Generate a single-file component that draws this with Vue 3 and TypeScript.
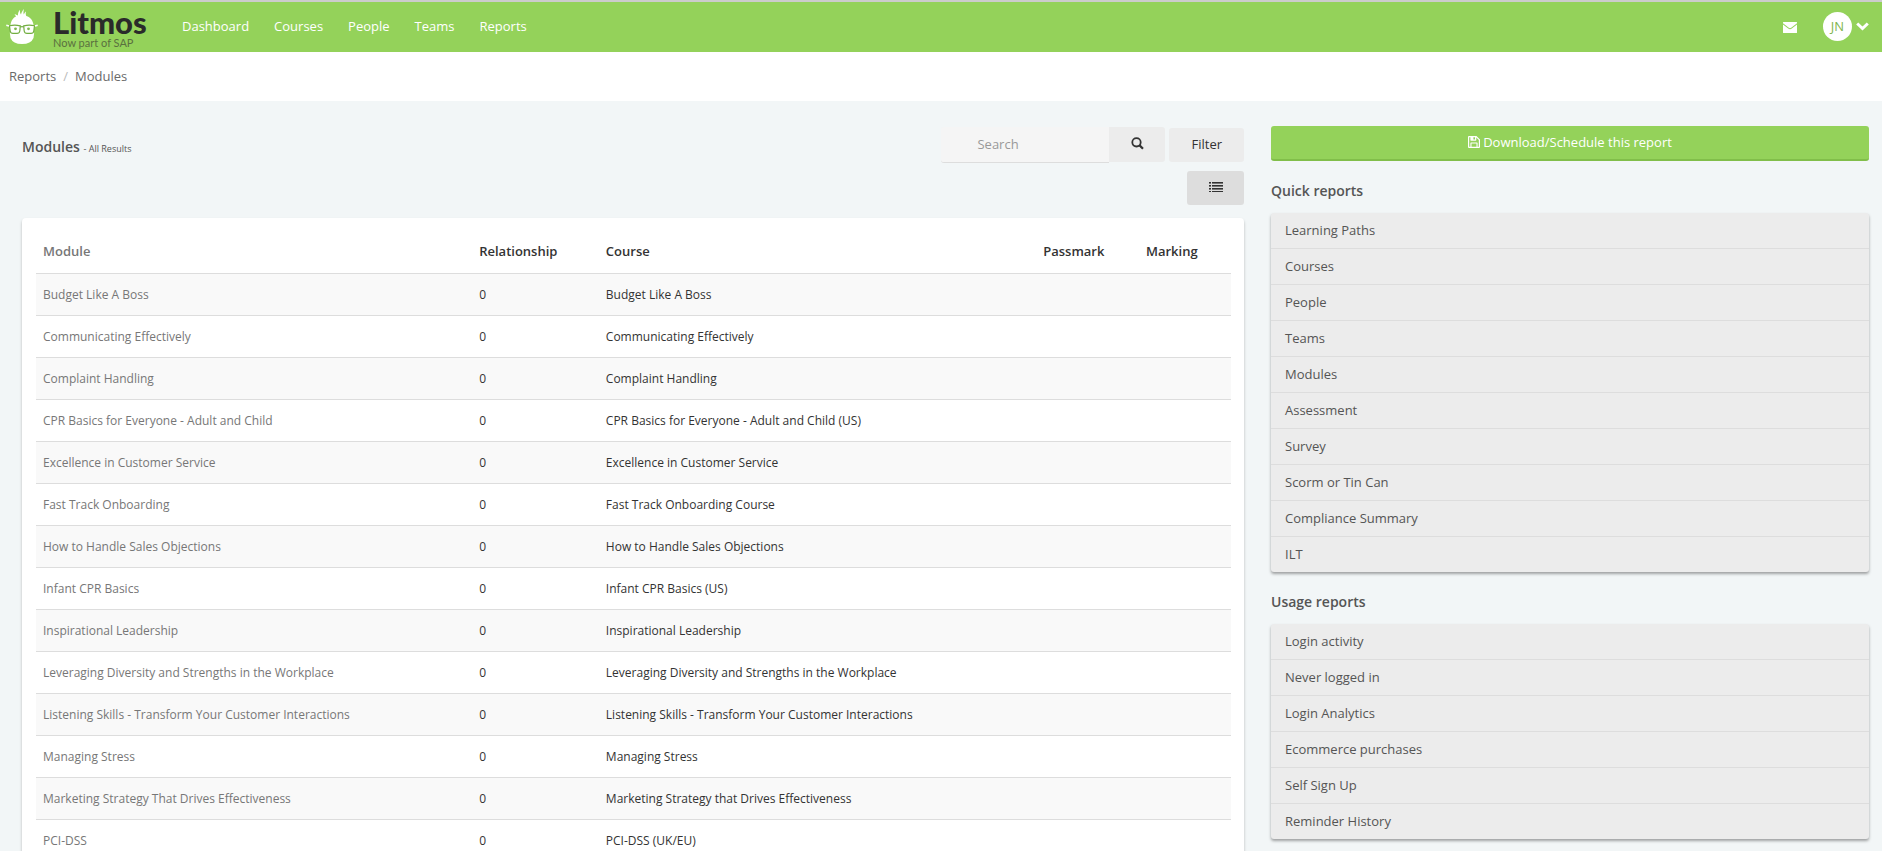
<script setup lang="ts">
interface ModuleRow {
  module: string
  relationship: number
  course: string
  passmark?: string
  marking?: string
}

interface ReportGroup {
  title: string
  items: string[]
}

const navItems: string[] = ['Dashboard', 'Courses', 'People', 'Teams', 'Reports']

const rows: ModuleRow[] = [
  { module: 'Budget Like A Boss', relationship: 0, course: 'Budget Like A Boss' },
  { module: 'Communicating Effectively', relationship: 0, course: 'Communicating Effectively' },
  { module: 'Complaint Handling', relationship: 0, course: 'Complaint Handling' },
  { module: 'CPR Basics for Everyone - Adult and Child', relationship: 0, course: 'CPR Basics for Everyone - Adult and Child (US)' },
  { module: 'Excellence in Customer Service', relationship: 0, course: 'Excellence in Customer Service' },
  { module: 'Fast Track Onboarding', relationship: 0, course: 'Fast Track Onboarding Course' },
  { module: 'How to Handle Sales Objections', relationship: 0, course: 'How to Handle Sales Objections' },
  { module: 'Infant CPR Basics', relationship: 0, course: 'Infant CPR Basics (US)' },
  { module: 'Inspirational Leadership', relationship: 0, course: 'Inspirational Leadership' },
  { module: 'Leveraging Diversity and Strengths in the Workplace', relationship: 0, course: 'Leveraging Diversity and Strengths in the Workplace' },
  { module: 'Listening Skills - Transform Your Customer Interactions', relationship: 0, course: 'Listening Skills - Transform Your Customer Interactions' },
  { module: 'Managing Stress', relationship: 0, course: 'Managing Stress' },
  { module: 'Marketing Strategy That Drives Effectiveness', relationship: 0, course: 'Marketing Strategy that Drives Effectiveness' },
  { module: 'PCI-DSS', relationship: 0, course: 'PCI-DSS (UK/EU)' },
]

const groups: ReportGroup[] = [
  {
    title: 'Quick reports',
    items: ['Learning Paths', 'Courses', 'People', 'Teams', 'Modules', 'Assessment', 'Survey', 'Scorm or Tin Can', 'Compliance Summary', 'ILT'],
  },
  {
    title: 'Usage reports',
    items: ['Login activity', 'Never logged in', 'Login Analytics', 'Ecommerce purchases', 'Self Sign Up', 'Reminder History'],
  },
]
</script>

<template>
  <div class="page">
    <header class="topbar">
      <a href="#" class="brand">
        <svg class="mascot" width="32" height="36" viewBox="0 0 32 36" aria-hidden="true">
          <path fill="#fff" d="M4.500 16C5 11.500 7.500 8.500 10 7.500L8.500 5L12 6.500C11.800 4.500 12.500 2.500 14 .8C13.800 2.800 14 4.300 15 5.500C15.500 3.500 16.300 1.800 18 0C17.300 2.500 17.300 4 17.800 5.500C18.500 4 19 3.200 20 2.500C19.600 4.200 19.700 5.500 20.300 7C24.500 8.300 27 11.500 27.500 16V19H4.500Z" />
          <path fill="#fff" d="M3.800 23.500Q9 25.500 13.500 23.500Q16 20 18.500 23.500Q23 25.500 28.200 23.500L27.500 29Q25 35 16 35T4.500 29Z" />
          <path fill="#fff" d="M4.500 17H27.500V26H4.500Z" />
          <g fill="#fff" stroke="#72ae41" stroke-width="1.200">
            <path d="M3.500 16.800Q8.500 15.300 14.300 16.800L13.800 22Q13.400 24.400 11 24.400H7Q4.600 24.400 4.200 22Z" />
            <path d="M28.500 16.800Q23.500 15.300 17.700 16.800L18.200 22Q18.600 24.400 21 24.400H25Q27.400 24.400 27.800 22Z" />
            <path fill="none" d="M14.300 18Q16 17.200 17.700 18" />
          </g>
          <path fill="none" stroke="#fff" stroke-width="1.500" d="M.3 16.200L3 17M31.700 16.200L29 17" />
          <circle cx="9.500" cy="19.800" r="1.400" fill="#7fb850" />
          <circle cx="22.500" cy="19.800" r="1.400" fill="#7fb850" />
        </svg>
        <span class="wordmark">
          <span class="brand-name">Litmos</span>
          <span class="brand-note">Now part of SAP</span>
        </span>
      </a>
      <nav class="nav" aria-label="Main">
        <a v-for="item in navItems" :key="item" href="#">{{ item }}</a>
      </nav>
      <div class="account">
        <button type="button" class="mail" aria-label="Messages">
          <svg width="14" height="11" viewBox="0 0 14 11">
            <path fill="#fff" d="M0 1.200V.3Q0 0 .5 0H13.500Q14 0 14 .3V1.200L8.200 5.800Q7 6.600 5.800 5.800Z" />
            <path fill="#fff" d="M0 2.400L5.200 6.600Q7 7.900 8.800 6.600L14 2.400V10.500Q14 11 13.500 11H.5Q0 11 0 10.500Z" />
          </svg>
        </button>
        <button type="button" class="user" aria-label="Account menu">
          <span class="avatar">JN</span>
          <svg width="13" height="9" viewBox="0 0 13 9">
            <path fill="none" stroke="#fff" stroke-width="3" d="M1.200 1.500L6.500 6.500L11.800 1.500" />
          </svg>
        </button>
      </div>
    </header>

    <nav class="crumbs" aria-label="Breadcrumb">
      <a href="#">Reports</a>
      <span class="slash">/</span>
      <a href="#">Modules</a>
    </nav>

    <div class="layout">
      <main>
        <div class="heading">
          <h1>Modules <small>- All Results</small></h1>
          <div class="tools">
            <form class="search" @submit.prevent>
              <input type="text" placeholder="Search" aria-label="Search" />
              <button type="submit" aria-label="Run search">
                <svg width="13" height="13" viewBox="0 0 13 13">
                  <circle cx="5.500" cy="5.300" r="4.200" fill="none" stroke="#333" stroke-width="1.800" />
                  <path d="M8.600 8.400L12 11.800" stroke="#333" stroke-width="2.200" />
                </svg>
              </button>
            </form>
            <button type="button" class="filter">Filter</button>
          </div>
        </div>
        <div class="view-row">
          <button type="button" class="view" aria-label="List view">
            <svg width="14" height="10" viewBox="0 0 14 10">
              <path fill="#333" d="M0 0h2v1H0zM0 3h2v1H0zM0 6h2v1H0zM0 9h2v1H0zM3 0h11v1H3zM3 3h11v1H3zM3 6h11v1H3zM3 9h11v1H3z" />
              <path fill="#777" d="M0 1h2v1H0zM0 4h2v1H0zM0 7h2v1H0zM3 1h11v1H3zM3 4h11v1H3zM3 7h11v1H3z" />
            </svg>
          </button>
        </div>
        <div class="card">
          <table>
            <colgroup>
              <col class="c-module" />
              <col class="c-relationship" />
              <col class="c-course" />
              <col class="c-passmark" />
              <col class="c-marking" />
            </colgroup>
            <thead>
              <tr>
                <th scope="col"><a href="#">Module</a></th>
                <th scope="col">Relationship</th>
                <th scope="col">Course</th>
                <th scope="col">Passmark</th>
                <th scope="col">Marking</th>
              </tr>
            </thead>
            <tbody>
              <tr v-for="row in rows" :key="row.module">
                <td><a href="#">{{ row.module }}</a></td>
                <td>{{ row.relationship }}</td>
                <td>{{ row.course }}</td>
                <td>{{ row.passmark }}</td>
                <td>{{ row.marking }}</td>
              </tr>
            </tbody>
          </table>
        </div>
      </main>

      <aside>
        <button type="button" class="download">
          <svg width="12" height="12" viewBox="0 0 12 12" aria-hidden="true">
            <path fill="#fff" fill-rule="evenodd" d="M1 0H8.500L12 3.500V11Q12 12 11 12H1Q0 12 0 11V1Q0 0 1 0ZM1.200 1.200V10.800H2.400V7Q2.400 6.400 3 6.400H9Q9.600 6.400 9.600 7V10.800H10.800V4L8.300 1.400V4Q8.300 4.800 7.600 4.800H3Q2.400 4.800 2.400 4V1.200ZM5.400 1.200V3.600H7V1.200ZM3.500 7.600V10.800H8.500V7.600Z" />
          </svg>
          Download/Schedule this report
        </button>
        <section v-for="group in groups" :key="group.title">
          <h2>{{ group.title }}</h2>
          <ul>
            <li v-for="item in group.items" :key="item"><a href="#">{{ item }}</a></li>
          </ul>
        </section>
      </aside>
    </div>
  </div>
</template>

<style>
body {
  margin: 0;
  background: #f2f6f7;
}
</style>

<style scoped>
.page {
  min-height: 100vh;
  font-family: "Open Sans", "Noto Sans", sans-serif;
  font-size: 13px;
  line-height: 20px;
  color: #333;
}

a {
  color: inherit;
  text-decoration: none;
}

button {
  border: 0;
  padding: 0;
  font: inherit;
  color: inherit;
  cursor: pointer;
}

.topbar {
  display: flex;
  align-items: center;
  box-sizing: border-box;
  height: 52px;
  padding: 0 13px 0 6px;
  border-top: 2px solid #ccc;
  background: #94d25a;
  color: #fff;
}

.brand {
  display: flex;
  align-items: center;
  gap: 15px;
  width: 176px;
}

.wordmark {
  display: flex;
  flex-direction: column;
  padding-top: 4px;
  font-family: Lato, sans-serif;
}

.brand-name {
  font-size: 31px;
  font-weight: 900;
  line-height: 28px;
  color: #2a2a2a;
}

.brand-note {
  font-size: 11px;
  line-height: 14px;
  color: #5a703f;
}

.nav {
  display: flex;
  gap: 25px;
  padding-bottom: 2px;
}

.account {
  display: flex;
  align-items: center;
  gap: 26px;
  margin-left: auto;
}

.mail,
.user {
  display: flex;
  align-items: center;
  gap: 4px;
  background: none;
}

.user {
  padding-bottom: 2px;
}

.avatar {
  width: 29px;
  border-radius: 50%;
  background: #fff;
  line-height: 29px;
  text-align: center;
  color: #7fb54d;
}

.crumbs {
  display: flex;
  align-items: center;
  gap: 7px;
  box-sizing: border-box;
  height: 49px;
  padding: 0 9px 2px;
  background: #fff;
  color: #6a6a6a;
}

.slash {
  color: #bbb;
}

.layout {
  display: grid;
  grid-template-columns: minmax(0, 1222fr) minmax(0, 598fr);
  gap: 27px;
  padding: 25px 13px 12px 22px;
}

.heading {
  display: flex;
  justify-content: space-between;
  align-items: center;
}

h1,
h2 {
  margin: 0;
  font-size: 14px;
  font-weight: 600;
  line-height: 20px;
  color: #555;
}

h1 {
  padding-top: 7px;
}

h1 small {
  font-size: 9px;
  font-weight: 400;
}

.tools {
  display: flex;
  align-items: center;
  gap: 4px;
  padding-top: 1px;
}

.search {
  display: flex;
}

.search input {
  box-sizing: border-box;
  width: 168px;
  height: 36px;
  padding: 0 12px 2px 36px;
  border: 0;
  border-bottom: 1px solid #ddd;
  border-radius: 3px 0 0 3px;
  background: #f5f5f5;
  font: inherit;
  color: #333;
}

.search input::placeholder {
  color: #999;
  opacity: 1;
}

.search button {
  width: 56px;
  height: 35px;
  border-radius: 0 3px 3px 0;
  background: #ececec;
}

.filter {
  height: 34px;
  padding: 0 22px 2px;
  border-radius: 3px;
  background: #ececec;
}

.view-row {
  display: flex;
  justify-content: flex-end;
  padding: 8px 0 13px;
}

.view {
  width: 57px;
  height: 34px;
  padding-bottom: 2px;
  border-radius: 3px;
  background: #ddd;
}

.card {
  padding: 13px 13px 20px 14px;
  border-radius: 4px;
  background: #fff;
  box-shadow: 0 2px 3px rgba(0, 0, 0, 0.25);
}

table {
  width: 100%;
  table-layout: fixed;
  border-collapse: collapse;
}

.c-module {
  width: 36.5%;
}

.c-relationship {
  width: 10.6%;
}

.c-course {
  width: 36.6%;
}

.c-passmark {
  width: 8.6%;
}

.c-marking {
  width: 7.7%;
}

th,
td {
  padding: 0 7px;
  text-align: left;
}

th {
  height: 40px;
  padding-bottom: 2px;
  font-weight: 600;
}

td {
  height: 41px;
  border-top: 1px solid #ddd;
  font-size: 12px;
}

th a,
td a {
  color: #777;
}

tbody tr:nth-child(odd) {
  background: #f9f9f9;
}

.download {
  display: flex;
  justify-content: center;
  align-items: center;
  gap: 3px;
  width: 100%;
  height: 35px;
  padding-bottom: 2px;
  border-bottom: 2px solid #81be4a;
  border-radius: 3px;
  background: #94d25a;
  color: #fff;
}

h2 {
  padding: 20px 0 12px;
}

ul {
  margin: 0;
  padding: 0;
  list-style: none;
  border-radius: 3px;
  background: #ececec;
  box-shadow: 0 2px 3px rgba(0, 0, 0, 0.35);
}

li a {
  display: block;
  padding: 7px 14px 8px;
  color: #555;
}

li + li {
  border-top: 1px solid #ddd;
}
</style>
